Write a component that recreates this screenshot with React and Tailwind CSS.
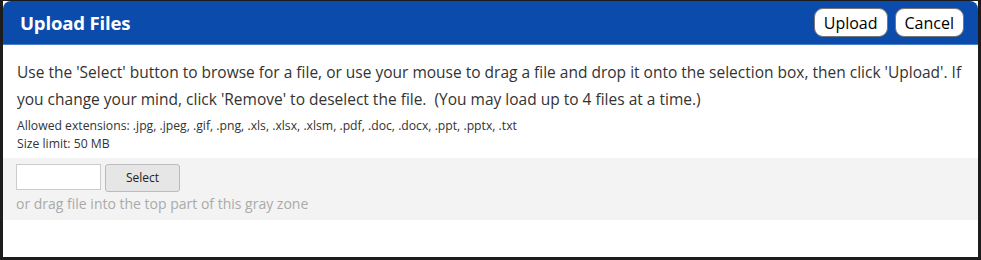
export default function App() {
  return (
    <div className="w-[981px] h-[260px] bg-[#9a9a9a]" style={{ fontFamily: '"Open Sans", "Noto Sans", sans-serif' }}>
      <div className="h-full border-l-[3px] border-r-[3px] border-b-[3px] border-t border-[#1c1c1c] bg-white flex flex-col">
        <div className="h-[44px] bg-[#0a4bac] rounded-t-[8px] border-b border-[#4a7fcc] flex items-center justify-between pl-[17px] pr-[14px]">
          <h1 className="text-white font-bold text-[18.6px] tracking-[-0.2px]">Upload Files</h1>
          <div className="flex gap-[7px]">
            <button className="h-[29px] px-[9px] bg-white border border-[#777] rounded-[9px] text-[16px] text-black leading-none">Upload</button>
            <button className="h-[29px] px-[9px] bg-white border border-[#777] rounded-[9px] text-[16px] text-black leading-none">Cancel</button>
          </div>
        </div>
        <div className="px-[14px] pt-[14px]">
          <p className="text-[15.5px] leading-[27px] text-[#333]">
            Use the 'Select' button to browse for a file, or use your mouse to drag a file and drop it onto the selection box, then click 'Upload'. If you change your mind, click 'Remove' to deselect the file.&nbsp; (You may load up to 4 files at a time.)
          </p>
          <div className="mt-[4px] text-[12.2px] leading-[18px] text-[#333]">
            <div>Allowed extensions: .jpg, .jpeg, .gif, .png, .xls, .xlsx, .xlsm, .pdf, .doc, .docx, .ppt, .pptx, .txt</div>
            <div>Size limit: 50 MB</div>
          </div>
        </div>
        <div className="mt-[5px] bg-[#f3f3f3] px-[13px] pt-[6px] pb-[5px]">
          <div className="flex gap-[4px]">
            <input className="w-[85px] h-[26px] bg-white border border-[#ccc]" />
            <button className="w-[75px] h-[28px] bg-[#e6e6e6] border border-[#bbb] rounded-[3px] text-[12px] text-[#222]">Select</button>
          </div>
          <div className="text-[14px] leading-[23px] text-[#aaa]">or drag file into the top part of this gray zone</div>
        </div>
      </div>
    </div>
  );
}
